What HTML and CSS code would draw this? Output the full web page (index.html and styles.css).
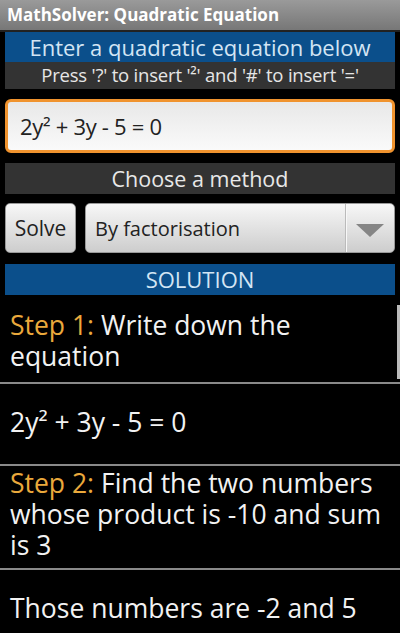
FILE: index.html
```html
<!DOCTYPE html>
<html lang="en">
<head>
    <meta charset="UTF-8">
    <meta name="viewport" content="width=device-width, initial-scale=1.0">
    <title>MathSolver: Quadratic Equation</title>
    <link rel="stylesheet" href="styles.css">
</head>
<body>
    <div class="titlebar">MathSolver: Quadratic Equation</div>

    <div class="panel">
        <div class="banner">Enter a quadratic equation below</div>
        <div class="hint">Press '?' to insert '²' and '#' to insert '='</div>

        <div class="field">2y² + 3y - 5 = 0</div>

        <div class="label">Choose a method</div>

        <div class="controls">
            <button class="solve">Solve</button>
            <div class="spinner">
                <span class="spinner-text">By factorisation</span>
                <span class="spinner-arrow"></span>
            </div>
        </div>

        <div class="banner solution">SOLUTION</div>
    </div>

    <!-- Daftar langkah penyelesaian -->
    <div class="steps">
        <div class="scrollbar"></div>
        <div class="step first"><span class="step-no">Step 1:</span> Write down the equation</div>
        <div class="step result">2y² + 3y - 5 = 0</div>
        <div class="step"><span class="step-no">Step 2:</span> Find the two numbers whose product is -10 and sum is 3</div>
        <div class="step result">Those numbers are -2 and 5</div>
    </div>
</body>
</html>
```

FILE: styles.css
```css
body {
    font-family: "Open Sans", "DejaVu Sans", sans-serif;
    margin: 0;
    padding: 0;
    background-color: #000;
    color: #f2f2f2;
    overflow: hidden;
}
.titlebar {
    height: 30px;
    line-height: 30px;
    padding-left: 7px;
    font-size: 17px;
    font-weight: bold;
    color: #fff;
    background: linear-gradient(#9a9a9a, #777);
    border-bottom: 2px solid #222;
}
.panel {
    padding: 0 5px;
}
.banner {
    height: 30px;
    line-height: 30px;
    text-align: center;
    font-size: 22px;
    color: #d3e5f4;
    background-color: #0b4f8b;
}
.hint {
    height: 27px;
    line-height: 26px;
    text-align: center;
    font-size: 18.5px;
    color: #e6e6e6;
    background-color: #333;
    letter-spacing: -0.2px;
}
.field {
    margin-top: 10px;
    height: 48px;
    line-height: 48px;
    padding-left: 12px;
    font-size: 22px;
    color: #222;
    background: linear-gradient(#e8e8e8, #fafafa);
    border: 3px solid #f0932e;
    border-radius: 6px;
    letter-spacing: -0.3px;
}
.label {
    margin-top: 10px;
    height: 31px;
    line-height: 31px;
    text-align: center;
    font-size: 21.5px;
    color: #e8e8e8;
    background-color: #333;
}
.controls {
    display: flex;
    gap: 9px;
    margin-top: 9px;
    height: 50px;
}
.solve {
    width: 71px;
    padding: 0;
    font-family: inherit;
    font-size: 21px;
    color: #222;
    background: linear-gradient(#f7f7f7, #cdcdcd);
    border: 1px solid #999;
    border-radius: 5px;
}
.spinner {
    flex: 1;
    display: flex;
    align-items: center;
    background: linear-gradient(#f7f7f7, #cdcdcd);
    border: 1px solid #999;
    border-radius: 5px;
}
.spinner-text {
    flex: 1;
    padding-left: 9px;
    font-size: 20px;
    color: #222;
}
.spinner-arrow {
    width: 48px;
    height: 100%;
    border-left: 1px solid #bbb;
    box-shadow: inset 1px 0 0 #f8f8f8;
    position: relative;
}
.spinner-arrow::after {
    content: "";
    position: absolute;
    left: 10px;
    top: 20px;
    border-left: 14px solid transparent;
    border-right: 14px solid transparent;
    border-top: 13px solid #858585;
}
.solution {
    margin-top: 11px;
    font-size: 22px;
    height: 31px;
    line-height: 31px;
}
.steps {
    position: relative;
}
.scrollbar {
    position: absolute;
    right: 0;
    top: 10px;
    width: 3px;
    height: 74px;
    background-color: #bbb;
}
.step {
    font-size: 26.5px;
    line-height: 31px;
    padding: 2px 10px 7px;
    border-bottom: 2px solid #8a8a8a;
}
.step.first {
    padding-top: 15px;
    padding-bottom: 10px;
}
.step.result {
    padding-top: 23px;
    padding-bottom: 26px;
}
.step-no {
    color: #eaa93c;
}
```
